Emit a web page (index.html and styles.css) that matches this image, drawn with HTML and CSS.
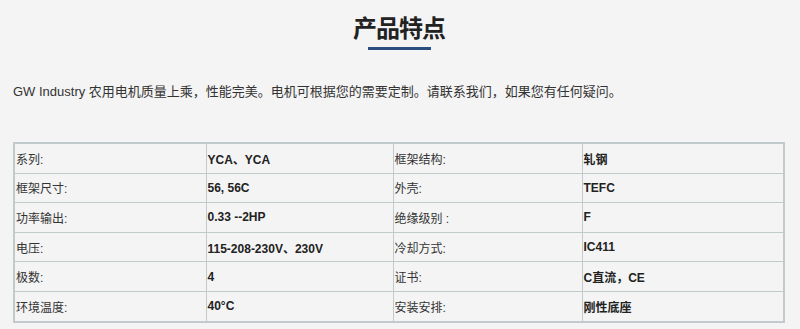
FILE: index.html
```html
<!DOCTYPE html>
<html lang="zh-CN">
<head>
<meta charset="utf-8">
<title>产品特点</title>
<link rel="stylesheet" href="styles.css">
</head>
<body>
<main class="page">
  <header class="heading">
    <h2 class="title">产品特点</h2>
    <span class="title-bar"></span>
  </header>
  <p class="intro">GW Industry 农用电机质量上乘，性能完美。电机可根据您的需要定制。请联系我们，如果您有任何疑问。</p>
  <table class="specs">
    <colgroup>
      <col class="c1"><col class="c2"><col class="c3"><col class="c4">
    </colgroup>
    <tbody>
      <tr><td>系列:</td><td class="val">YCA、YCA</td><td>框架结构:</td><td class="val">轧钢</td></tr>
      <tr><td>框架尺寸:</td><td class="val">56, 56C</td><td>外壳:</td><td class="val">TEFC</td></tr>
      <tr><td>功率输出:</td><td class="val">0.33 --2HP</td><td>绝缘级别 :</td><td class="val">F</td></tr>
      <tr><td>电压:</td><td class="val">115-208-230V、230V</td><td>冷却方式:</td><td class="val">IC411</td></tr>
      <tr><td>极数:</td><td class="val">4</td><td>证书:</td><td class="val">C直流，CE</td></tr>
      <tr><td>环境温度:</td><td class="val">40°C</td><td>安装安排:</td><td class="val">刚性底座</td></tr>
    </tbody>
  </table>
</main>
</body>
</html>
```

FILE: styles.css
```css
html, body {
  margin: 0;
  padding: 0;
  background: #f4f4f4;
}
body {
  font-family: "Liberation Sans", Arial, "Noto Sans CJK SC", sans-serif;
  color: #333;
}
.page {
  padding: 0 15px 0 13px;
}
.heading {
  display: flex;
  flex-direction: column;
  align-items: center;
  padding-top: 11px;
}
.title {
  margin: 0;
  font-family: "Noto Sans CJK SC", sans-serif;
  font-size: 24px;
  line-height: 32px;
  font-weight: 700;
  color: #222;
  letter-spacing: -1px;
}
.title-bar {
  display: block;
  width: 63px;
  height: 3px;
  margin-top: 4px;
  background: #2a4f7f;
}
.intro {
  margin: 32px 0 0;
  font-size: 13px;
  line-height: 20px;
  color: #333;
}
.specs {
  margin-top: 40px;
  width: 100%;
  border-collapse: collapse;
  font-size: 12px;
  color: #333;
  border: 2px solid #c2cbcb;
}
.c1 { width: 192px; }
.c2 { width: 187px; }
.c3 { width: 189px; }
.specs td {
  border: 1px solid #c2cbcb;
  padding: 0 1px;
  height: 28.6px;
  vertical-align: middle;
  font-family: "Liberation Sans", Arial, "Noto Sans CJK SC", sans-serif;
}
.specs td.val {
  font-weight: 700;
  color: #222;
}
```
